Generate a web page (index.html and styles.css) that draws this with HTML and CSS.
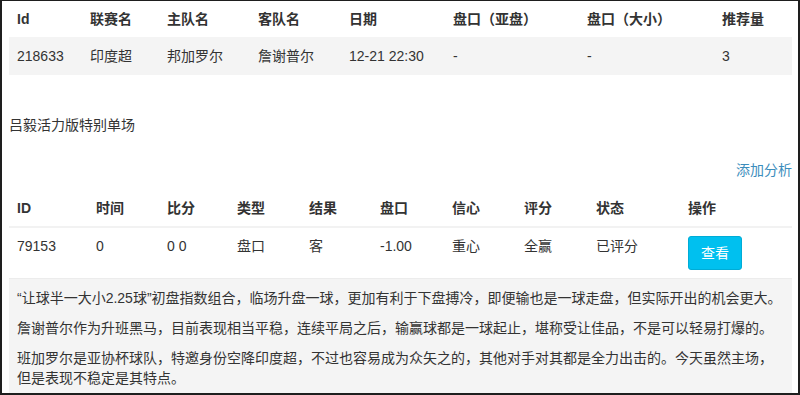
FILE: index.html
```html
<!DOCTYPE html>
<html lang="zh-CN">
<head>
<meta charset="utf-8">
<title>推荐</title>
<link rel="stylesheet" href="styles.css">
</head>
<body>
<div class="frame">
  <table class="grid t1">
    <colgroup>
      <col class="c73"><col class="c77"><col class="c91"><col class="c91"><col class="c104"><col class="c134"><col class="c135"><col class="c78">
    </colgroup>
    <thead>
      <tr><th>Id</th><th>联赛名</th><th>主队名</th><th>客队名</th><th>日期</th><th>盘口（亚盘）</th><th>盘口（大小）</th><th>推荐量</th></tr>
    </thead>
    <tbody>
      <tr class="stripe"><td>218633</td><td>印度超</td><td>邦加罗尔</td><td>詹谢普尔</td><td>12-21 22:30</td><td>-</td><td>-</td><td>3</td></tr>
    </tbody>
  </table>

  <div class="title">吕毅活力版特别单场</div>
  <div class="actions"><a class="link" href="#">添加分析</a></div>

  <table class="grid t2">
    <colgroup>
      <col class="c79"><col class="c71"><col class="c70"><col class="c72"><col class="c71"><col class="c72"><col class="c72"><col class="c72"><col class="c92"><col class="c112">
    </colgroup>
    <thead>
      <tr><th>ID</th><th>时间</th><th>比分</th><th>类型</th><th>结果</th><th>盘口</th><th>信心</th><th>评分</th><th>状态</th><th>操作</th></tr>
    </thead>
    <tbody>
      <tr><td>79153</td><td>0</td><td>0 0</td><td>盘口</td><td>客</td><td>-1.00</td><td>重心</td><td>全赢</td><td>已评分</td><td><button class="btn">查看</button></td></tr>
    </tbody>
  </table>

  <div class="desc">
    <p>“让球半一大小2.25球”初盘指数组合，临场升盘一球，更加有利于下盘搏冷，即便输也是一球走盘，但实际开出的机会更大。</p>
    <p>詹谢普尔作为升班黑马，目前表现相当平稳，连续平局之后，输赢球都是一球起止，堪称受让佳品，不是可以轻易打爆的。</p>
    <p>班加罗尔是亚协杯球队，特邀身份空降印度超，不过也容易成为众矢之的，其他对手对其都是全力出击的。今天虽然主场，但是表现不稳定是其特点。</p>
  </div>
</div>
</body>
</html>
```

FILE: styles.css
```css
* { box-sizing: border-box; }
html, body { margin: 0; padding: 0; background: #fff; }
body {
  font-family: "Liberation Sans", "Noto Sans CJK SC", sans-serif;
  font-size: 14px;
  line-height: 20px;
  color: #333;
}
.frame {
  width: 800px;
  height: 395px;
  overflow: hidden;
  border-style: solid;
  border-color: #1e1e1e;
  border-width: 1px 2px 2px 2px;
  padding: 0 6px 0 7px;
}
.grid {
  width: 783px;
  border-collapse: collapse;
  table-layout: fixed;
}
.grid th, .grid td {
  text-align: left;
  vertical-align: top;
  padding: 8px;
  white-space: nowrap;
}
.grid th { font-weight: 700; color: #333; }
.t1 td { padding: 9px 8px; }
.stripe td { background: #f4f4f4; }
.t2 th { border-bottom: 2px solid #f2f2f2; }
.c70 { width: 70px; } .c71 { width: 71px; } .c72 { width: 72px; } .c73 { width: 73px; }
.c77 { width: 77px; } .c78 { width: 78px; } .c79 { width: 79px; } .c91 { width: 91px; }
.c92 { width: 92px; } .c104 { width: 104px; } .c112 { width: 112px; } .c134 { width: 134px; } .c135 { width: 135px; }
.title { margin-top: 40px; }
.actions { margin-top: 25px; margin-bottom: 10px; width: 783px; text-align: right; }
.link { color: #3c8dbc; text-decoration: none; }
.btn {
  font-family: inherit;
  font-size: 14px;
  line-height: 20px;
  color: #fff;
  background: #00c0ef;
  border: 1px solid #00acd6;
  border-radius: 3px;
  padding: 6px 12px;
  margin: 0;
}
.desc {
  width: 783px;
  background: #f4f4f4;
  border-top: 1px solid #ececec;
  padding: 9px 7px 10px 8px;
}
.desc p { margin: 0 0 10px; }
```
